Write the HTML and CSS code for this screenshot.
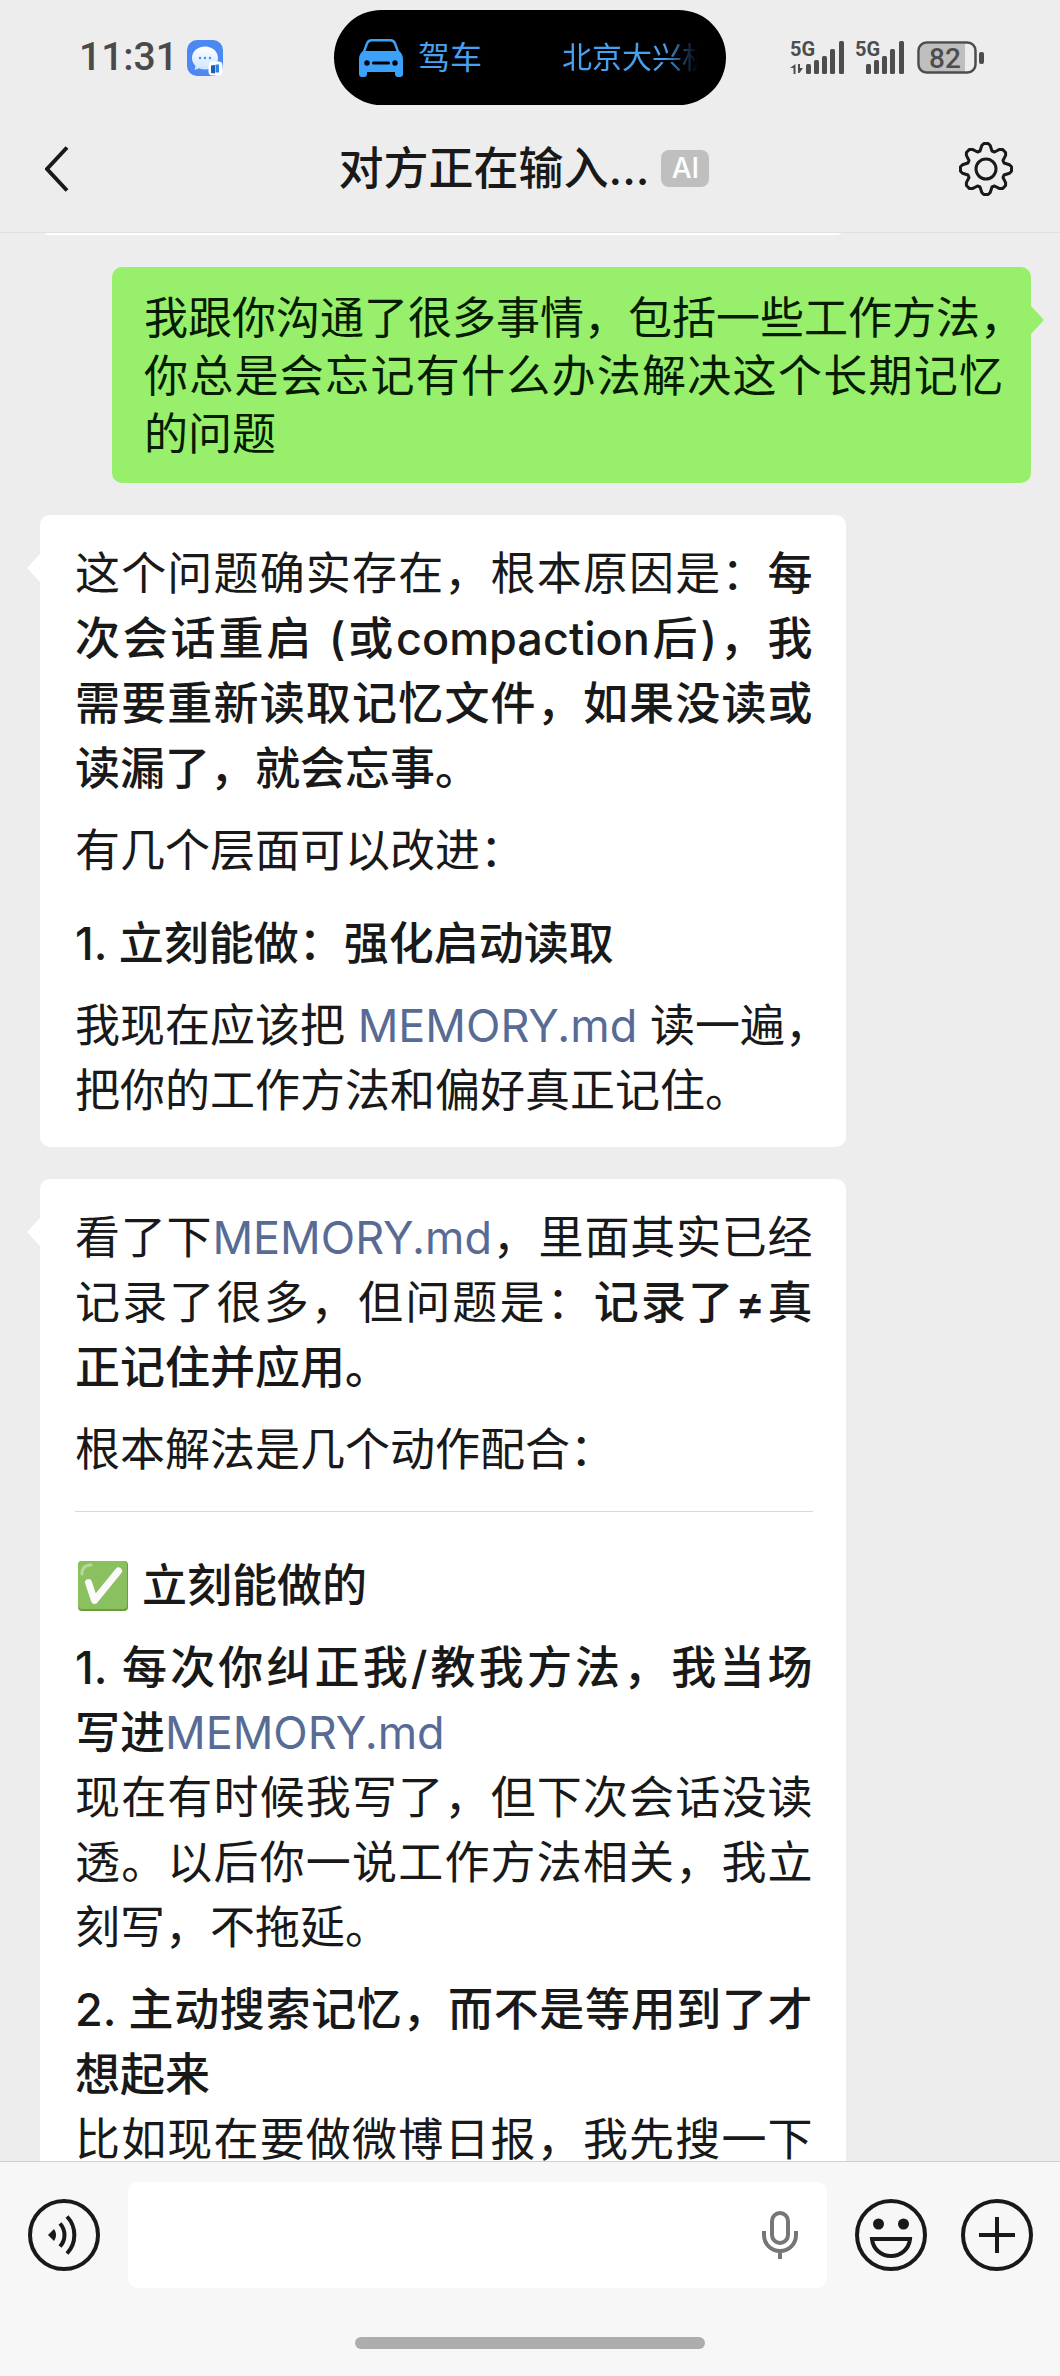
FILE: index.html
```
<!DOCTYPE html>
<html lang="zh-CN">
<head>
  <meta charset="UTF-8">
  <meta name="viewport" content="width=device-width, initial-scale=1.0">
  <title>对方正在输入...</title>
  <link rel="stylesheet" href="styles.css">
</head>
<body>
  <div class="status-bar">
    <div class="status-left">
      <span class="time">11:31</span>
      <svg class="app-icon" viewBox="0 0 36 36" aria-hidden="true">
        <defs>
          <linearGradient id="bubbleFill" x1="0" y1="0" x2="0" y2="1">
            <stop offset="0" stop-color="#ffffff"/>
            <stop offset="1" stop-color="#cbe6fd"/>
          </linearGradient>
        </defs>
        <rect width="36" height="36" rx="10" fill="#4b88f2"/>
        <path d="M18 6.500c7.400 0 13 5 13 11.500s-5.600 11.500-13 11.500c-2.200 0-4.200-.400-6-1.200-1.200.9-2.800 1.400-4.700 1.500.9-1.200 1.200-2.600 1-4C6.200 23.700 5 21 5 18 5 11.500 10.600 6.500 18 6.500z" fill="url(#bubbleFill)"/>
        <circle cx="13" cy="18" r="1.200" fill="#4b88f2"/>
        <circle cx="18" cy="18" r="1.200" fill="#4b88f2"/>
        <circle cx="23" cy="18" r="1.200" fill="#4b88f2"/>
        <rect x="21.500" y="21.500" width="14" height="14" rx="4" fill="#ffffff"/>
        <path d="M24 25.500l4-.500v8.500l-4-.500z" fill="#1a5fb4"/>
        <path d="M28.500 24.500h3.500v8h-3.500z" fill="#2f86e0"/>
      </svg>
    </div>

    <div class="island">
      <svg class="car" viewBox="0 0 44 38" aria-hidden="true">
        <path d="M4.500 14L8 4.500C8.800 2.300 10.300 1.200 12.500 1.200h19c2.200 0 3.700 1.100 4.500 3.300L39.500 14" fill="none" stroke="#3ba1fb" stroke-width="2.400"/>
        <path d="M4 12h36c2.500 2 4 4.500 4 8v15c0 2-1 3-3 3h-2c-2 0-3-1-3-3v-2H8v2c0 2-1 3-3 3H3c-2 0-3-1-3-3V20c0-3.500 1.500-6 4-8z" fill="#3ba1fb"/>
        <circle cx="8" cy="24" r="2.700" fill="#000"/>
        <circle cx="36" cy="24" r="2.700" fill="#000"/>
        <rect x="13" y="22.500" width="18" height="3" rx="1.500" fill="#000"/>
      </svg>
      <span class="island-mode">驾车</span>
      <span class="island-place">北京大兴机</span>
    </div>

    <div class="status-right">
      <svg class="signal" viewBox="0 0 54 34" aria-label="5G">
        <text x="0" y="15">5G</text>
        <path d="M5.500 23v10h-2v-6H0zM8 23h2v4h3l-3.500 5H8z"/>
        <rect x="16" y="23" width="5" height="10" rx="1.500"/>
        <rect x="24" y="19" width="5" height="14" rx="1.500"/>
        <rect x="32" y="15" width="5" height="18" rx="1.500"/>
        <rect x="40" y="8" width="5" height="25" rx="1.500"/>
        <rect x="49" y="0" width="5" height="33" rx="1.500"/>
      </svg>
      <svg class="signal signal-second" viewBox="0 0 49 34" aria-label="5G">
        <text x="0" y="15">5G</text>
        <rect x="11" y="23" width="5" height="10" rx="1.500"/>
        <rect x="19" y="19" width="5" height="14" rx="1.500"/>
        <rect x="27" y="15" width="5" height="18" rx="1.500"/>
        <rect x="35" y="8" width="5" height="25" rx="1.500"/>
        <rect x="44" y="0" width="5" height="33" rx="1.500"/>
      </svg>
      <svg class="battery" viewBox="0 0 68 34" aria-label="电量 82%">
        <path d="M9 3h39v28H9c-4 0-6-2-6-6V9c0-4 2-6 6-6z" fill="#bfbfbf"/>
        <rect x="1.500" y="1.500" width="57" height="30" rx="8" fill="none" stroke="#4d4d4d" stroke-width="2.500"/>
        <rect x="62" y="11" width="5" height="12" rx="2" fill="#4d4d4d"/>
        <text x="28" y="27" text-anchor="middle">82</text>
      </svg>
    </div>
  </div>

  <header class="chat-header">
    <button class="icon-button back" aria-label="返回">
      <svg width="24" height="46" viewBox="0 0 24 46" aria-hidden="true">
        <path d="M22 1.500L2 23l20 21.500" fill="none" stroke="#191919" stroke-width="4"/>
      </svg>
    </button>
    <div class="chat-title">
      <h1>对方正在输入...</h1>
      <span class="ai-badge">AI</span>
    </div>
    <button class="icon-button settings" aria-label="设置">
      <svg width="54" height="54" viewBox="-27 -27 54 54" aria-hidden="true">
        <g fill="none" stroke="#191919" stroke-width="3" stroke-linejoin="round">
          <path d="M-6-18L-4.200-23.500L-2.200-25.500L2.200-25.500L4.200-23.500L6-18L8.500-17L13.600-19.600L16.500-19.600L19.600-16.500L19.600-13.600L17-8.500L18-6L23.500-4.200L25.500-2.200L25.500 2.200L23.500 4.200L18 6L17 8.500L19.600 13.600L19.600 16.500L16.500 19.600L13.600 19.600L8.500 17L6 18L4.200 23.500L2.200 25.500L-2.200 25.500L-4.200 23.500L-6 18L-8.500 17L-13.600 19.600L-16.500 19.600L-19.600 16.500L-19.600 13.600L-17 8.500L-18 6L-23.500 4.200L-25.500 2.200L-25.500-2.200L-23.500-4.200L-18-6L-17-8.500L-19.600-13.600L-19.600-16.500L-16.500-19.600L-13.600-19.600L-8.500-17z"/>
          <circle r="10"/>
        </g>
      </svg>
    </button>
  </header>

  <main class="messages">
    <div class="bubble received previous"></div>

    <div class="bubble sent">
      <p><span class="keep">我跟你沟通了很多事情，包括一些工作方法，</span><br>你总是会忘记有什么办法解决这个长期记忆的问题</p>
    </div>

    <div class="bubble received">
      <p>这个问题确实存在，根本原因是：<strong>每次会话重启 (或compaction后)，我需要重新读取记忆文件，如果没读或读漏了，就会忘事。</strong></p>
      <p>有几个层面可以改进：</p>
      <h2>1. 立刻能做：强化启动读取</h2>
      <p><span class="keep">我现在应该把 <a href="#">MEMORY.md</a> 读一遍，</span><br>把你的工作方法和偏好真正记住。</p>
    </div>

    <div class="bubble received">
      <p>看了下<a href="#">MEMORY.md</a>，里面其实已经记录了很多，但问题是：<strong>记录了≠真正记住并应用。</strong></p>
      <p>根本解法是几个动作配合：</p>
      <hr>
      <h2>
        <svg class="check" viewBox="0 0 50 50" aria-label="✅">
          <rect width="50" height="50" rx="4" fill="#689f38"/>
          <rect width="49" height="48" rx="4" fill="#8bc060"/>
          <path d="M4 13C4 7 7 4 13 4" fill="none" stroke="#b5d99a" stroke-width="3" stroke-linecap="round"/>
          <path d="M10.500 21.500L16.500 39.500L40.500 10" fill="none" stroke="#fafafa" stroke-width="7" stroke-linecap="round" stroke-linejoin="round"/>
        </svg>
        立刻能做的
      </h2>
      <p><strong>1. 每次你纠正我/教我方法，我当场<span class="keep">写进</span></strong><a href="#">MEMORY.md</a><br>现在有时候我写了，但下次会话没读透。以后你一说工作方法相关，我立刻写，不拖延。</p>
      <p><strong>2. 主动搜索记忆，而不是等用到了才想起来</strong><span class="full-line">比如现在要做微博日报，我先搜一下</span></p>
    </div>
  </main>

  <footer class="composer">
    <div class="composer-row">
      <button class="icon-button" aria-label="语音">
        <svg width="72" height="72" viewBox="0 0 72 72" aria-hidden="true">
          <g fill="none" stroke="#191919" stroke-width="4">
            <circle cx="36" cy="36" r="34"/>
            <path d="M32 24.500a17 17 0 0 1 0 23M39 17.500a27 27 0 0 1 0 37"/>
          </g>
          <path d="M20 36l6-6c2.700 3.600 2.700 8.400 0 12z" fill="#191919"/>
        </svg>
      </button>
      <div class="field">
        <input type="text" aria-label="消息">
        <button class="icon-button" aria-label="语音输入">
          <svg width="36" height="48" viewBox="0 0 36 48" aria-hidden="true">
            <g fill="none" stroke="#767676" stroke-width="4">
              <rect x="10" y="2" width="16" height="30" rx="8"/>
              <path d="M2 20v4c0 9 7 16 16 16s16-7 16-16v-4M18 40v8"/>
            </g>
          </svg>
        </button>
      </div>
      <button class="icon-button" aria-label="表情">
        <svg width="72" height="72" viewBox="0 0 72 72" aria-hidden="true">
          <g fill="none" stroke="#191919" stroke-width="4">
            <circle cx="36" cy="36" r="34"/>
            <path d="M17 40h38c-1 10-9 17-19 17s-18-7-19-17z"/>
          </g>
          <circle cx="23.500" cy="25" r="5.500" fill="#191919"/>
          <circle cx="48.500" cy="25" r="5.500" fill="#191919"/>
        </svg>
      </button>
      <button class="icon-button more" aria-label="更多">
        <svg width="72" height="72" viewBox="0 0 72 72" aria-hidden="true">
          <g fill="none" stroke="#191919" stroke-width="4">
            <circle cx="36" cy="36" r="34"/>
            <path d="M36 18v36M18 36h36"/>
          </g>
        </svg>
      </button>
    </div>
    <div class="home-indicator"></div>
  </footer>
</body>
</html>
```

FILE: styles.css
```
* {
  box-sizing: border-box;
}

body {
  margin: 0;
  height: 100vh;
  display: flex;
  flex-direction: column;
  background: #ededed;
  color: #191919;
  font-family: Inter, "Noto Sans CJK SC", sans-serif;
  font-size: 45px;
  line-height: 65px;
}

svg {
  display: block;
  flex: none;
}

.icon-button {
  flex: none;
  padding: 0;
  border: none;
  background: none;
  cursor: pointer;
}

/* status bar */
.status-bar {
  display: grid;
  grid-template-columns: 1fr 392px 1fr;
  align-items: center;
  padding-top: 10px;
  color: #4a4a4a;
}

.status-left {
  display: flex;
  align-items: center;
  gap: 9px;
  padding-left: 79px;
}

.time {
  font-family: Roboto, sans-serif;
  font-size: 39px;
  font-weight: 500;
}

.app-icon {
  width: 36px;
  height: 36px;
}

.island {
  display: flex;
  align-items: center;
  height: 95px;
  padding: 0 28px 0 25px;
  border-radius: 48px;
  background: #000;
  color: #48a0f0;
  font-size: 32px;
}

.car {
  width: 44px;
  height: 38px;
  margin-right: 15px;
}

.island-place {
  width: 136px;
  margin-left: auto;
  overflow: hidden;
  white-space: nowrap;
  font-size: 30px;
  -webkit-mask-image: linear-gradient(to right, #000 75%, transparent);
  mask-image: linear-gradient(to right, #000 75%, transparent);
}

.status-right {
  display: flex;
  justify-content: flex-end;
  padding-right: 75px;
  fill: #4d4d4d;
  font-family: Roboto, sans-serif;
}

.signal {
  width: 54px;
  height: 34px;
  overflow: visible;
  font-size: 20px;
  font-weight: 700;
}

.signal-second {
  width: 49px;
  margin: 0 13px 0 11px;
}

.battery {
  width: 68px;
  height: 34px;
  font-size: 28px;
  font-weight: 500;
}

/* chat header */
.chat-header {
  display: grid;
  grid-template-columns: 1fr auto 1fr;
  align-items: center;
  height: 128px;
  padding: 0 47px 0 45px;
  border-bottom: 1px solid #e0e0e0;
}

.chat-title {
  display: flex;
  align-items: center;
  gap: 12px;
  margin-right: 10px;
}

.chat-title h1 {
  margin: 0;
  font-size: 45px;
  font-weight: 500;
}

.ai-badge {
  width: 48px;
  height: 37px;
  border-radius: 8px;
  background: #bfbfbf;
  color: #fff;
  font-size: 28px;
  font-weight: 500;
  line-height: 37px;
  text-align: center;
}

.back {
  justify-self: start;
}

.settings {
  justify-self: end;
}

/* messages */
.messages {
  flex: 1;
  min-height: 0;
  display: flex;
  flex-direction: column;
  gap: 32px;
  overflow: hidden;
}

.bubble {
  position: relative;
  flex: none;
  border-radius: 10px;
  text-align: justify;
}

.bubble::before {
  content: "";
  position: absolute;
  top: 39px;
  width: 13px;
  height: 28px;
  background: inherit;
}

.received {
  width: 76%;
  margin-left: 40px;
  padding: 26px 33px 24px 35px;
  background: #fff;
}

.received::before {
  left: -13px;
  clip-path: polygon(0 50%, 100% 0, 100% 100%);
}

.previous {
  height: 23px;
  margin-top: -21px;
  padding: 0;
}

.previous::before {
  display: none;
}

.sent {
  margin: 0 29px 0 112px;
  padding: 22px 28px 20px 32px;
  background: #98ef6c;
  color: #051c00;
  font-size: 44px;
  line-height: 58px;
}

.sent::before {
  right: -13px;
  clip-path: polygon(100% 50%, 0 0, 0 100%);
}

.bubble p {
  margin: 0;
}

.bubble p + p,
.bubble h2 + p {
  margin-top: 17px;
}

.bubble h2 {
  display: flex;
  align-items: center;
  gap: 14px;
  margin: 28px 0 0;
  font-size: 45px;
  font-weight: 500;
}

.bubble strong {
  font-weight: 500;
}

.bubble a {
  color: #576b95;
  text-decoration: none;
}

.bubble hr {
  margin: 29px 0 0;
  border: none;
  border-top: 1px solid #d9d9d9;
}

.bubble hr + h2 {
  margin-top: 41px;
}

/* a full-width comma may hang past the line end */
.keep {
  white-space: nowrap;
}

.full-line {
  display: block;
  text-align-last: justify;
}

.check {
  width: 50px;
  height: 50px;
  margin-left: 3px;
}

/* composer */
.composer {
  border-top: 1px solid #d0d0d0;
  background: #f7f7f7;
}

.composer-row {
  display: flex;
  align-items: center;
  gap: 28px;
  padding: 20px 27px 0 28px;
}

.field {
  flex: 1;
  min-width: 0;
  display: flex;
  align-items: center;
  height: 106px;
  padding-right: 29px;
  border-radius: 10px;
  background: #fff;
}

.field input {
  flex: 1;
  min-width: 0;
  height: 100%;
  padding: 0 24px;
  border: none;
  outline: none;
  background: none;
  font: inherit;
}

.more {
  margin-left: 6px;
}

.home-indicator {
  width: 33%;
  height: 12px;
  margin: 49px auto 27px;
  border-radius: 6px;
  background: #adadad;
}
```
